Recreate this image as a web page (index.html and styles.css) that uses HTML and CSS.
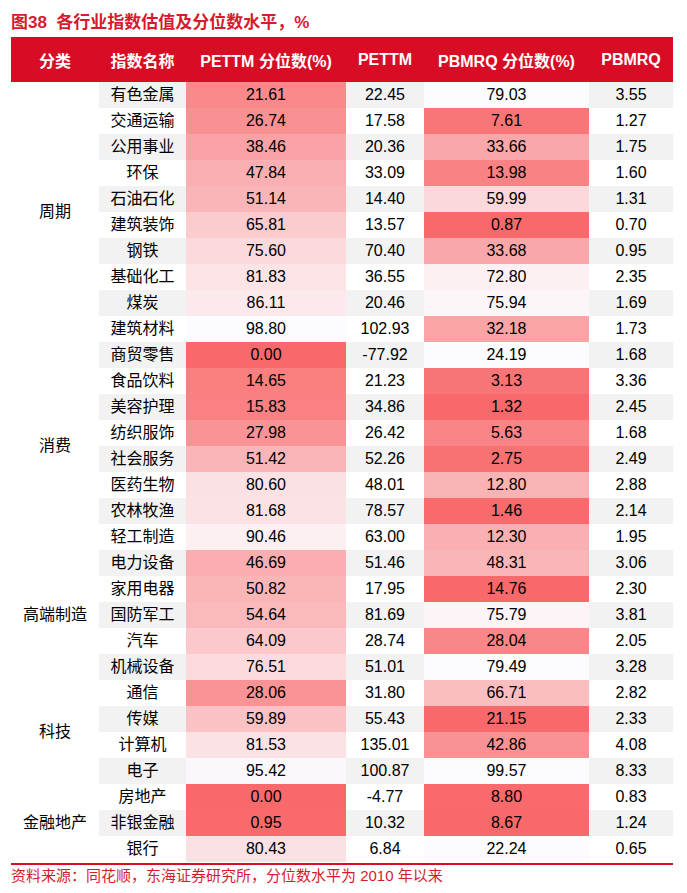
FILE: index.html
```html
<!DOCTYPE html>
<html lang="zh-CN">
<head>
<meta charset="utf-8">
<title>各行业指数估值及分位数水平</title>
<link rel="stylesheet" href="styles.css">
</head>
<body>
<div class="page">
  <div class="title">图38&nbsp;&nbsp;各行业指数估值及分位数水平，%</div>
  <table class="valuation">
    <colgroup>
      <col class="c-cat"><col class="c-name"><col class="c-pep"><col class="c-pe"><col class="c-pbp"><col class="c-pb">
    </colgroup>
    <thead>
      <tr><th>分类</th><th>指数名称</th><th>PETTM 分位数(%)</th><th>PETTM</th><th>PBMRQ 分位数(%)</th><th>PBMRQ</th></tr>
    </thead>
    <tbody>
      <tr class="odd"><td class="cat" rowspan="10">周期</td><td class="name">有色金属</td><td class="heat" style="background:rgb(249,137,139)">21.61</td><td class="plain">22.45</td><td class="heat" style="background:rgb(252,252,255)">79.03</td><td class="plain">3.55</td></tr>
      <tr><td class="name">交通运输</td><td class="heat" style="background:rgb(249,145,147)">26.74</td><td class="plain">17.58</td><td class="heat" style="background:rgb(248,118,120)">7.61</td><td class="plain">1.27</td></tr>
      <tr class="odd"><td class="name">公用事业</td><td class="heat" style="background:rgb(250,162,165)">38.46</td><td class="plain">20.36</td><td class="heat" style="background:rgb(250,167,169)">33.66</td><td class="plain">1.75</td></tr>
      <tr><td class="name">环保</td><td class="heat" style="background:rgb(250,176,179)">47.84</td><td class="plain">33.09</td><td class="heat" style="background:rgb(249,130,132)">13.98</td><td class="plain">1.60</td></tr>
      <tr class="odd"><td class="name">石油石化</td><td class="heat" style="background:rgb(250,181,184)">51.14</td><td class="plain">14.40</td><td class="heat" style="background:rgb(251,216,219)">59.99</td><td class="plain">1.31</td></tr>
      <tr><td class="name">建筑装饰</td><td class="heat" style="background:rgb(251,203,206)">65.81</td><td class="plain">13.57</td><td class="heat" style="background:rgb(248,105,107)">0.87</td><td class="plain">0.70</td></tr>
      <tr class="odd"><td class="name">钢铁</td><td class="heat" style="background:rgb(251,217,220)">75.60</td><td class="plain">70.40</td><td class="heat" style="background:rgb(250,167,169)">33.68</td><td class="plain">0.95</td></tr>
      <tr><td class="name">基础化工</td><td class="heat" style="background:rgb(251,227,230)">81.83</td><td class="plain">36.55</td><td class="heat" style="background:rgb(252,240,243)">72.80</td><td class="plain">2.35</td></tr>
      <tr class="odd"><td class="name">煤炭</td><td class="heat" style="background:rgb(251,233,236)">86.11</td><td class="plain">20.46</td><td class="heat" style="background:rgb(252,246,249)">75.94</td><td class="plain">1.69</td></tr>
      <tr><td class="name">建筑材料</td><td class="heat" style="background:rgb(252,252,255)">98.80</td><td class="plain">102.93</td><td class="heat" style="background:rgb(250,164,166)">32.18</td><td class="plain">1.73</td></tr>

      <tr class="odd"><td class="cat" rowspan="8">消费</td><td class="name">商贸零售</td><td class="heat" style="background:rgb(248,105,107)">0.00</td><td class="plain">-77.92</td><td class="heat" style="background:rgb(252,252,255)">24.19</td><td class="plain">1.68</td></tr>
      <tr><td class="name">食品饮料</td><td class="heat" style="background:rgb(249,127,129)">14.65</td><td class="plain">21.23</td><td class="heat" style="background:rgb(248,117,119)">3.13</td><td class="plain">3.36</td></tr>
      <tr class="odd"><td class="name">美容护理</td><td class="heat" style="background:rgb(249,129,131)">15.83</td><td class="plain">34.86</td><td class="heat" style="background:rgb(248,105,107)">1.32</td><td class="plain">2.45</td></tr>
      <tr><td class="name">纺织服饰</td><td class="heat" style="background:rgb(249,147,149)">27.98</td><td class="plain">26.42</td><td class="heat" style="background:rgb(249,133,135)">5.63</td><td class="plain">1.68</td></tr>
      <tr class="odd"><td class="name">社会服务</td><td class="heat" style="background:rgb(250,181,184)">51.42</td><td class="plain">52.26</td><td class="heat" style="background:rgb(248,114,116)">2.75</td><td class="plain">2.49</td></tr>
      <tr><td class="name">医药生物</td><td class="heat" style="background:rgb(251,225,228)">80.60</td><td class="plain">48.01</td><td class="heat" style="background:rgb(250,179,181)">12.80</td><td class="plain">2.88</td></tr>
      <tr class="odd"><td class="name">农林牧渔</td><td class="heat" style="background:rgb(251,226,229)">81.68</td><td class="plain">78.57</td><td class="heat" style="background:rgb(248,106,108)">1.46</td><td class="plain">2.14</td></tr>
      <tr><td class="name">轻工制造</td><td class="heat" style="background:rgb(252,240,242)">90.46</td><td class="plain">63.00</td><td class="heat" style="background:rgb(250,176,178)">12.30</td><td class="plain">1.95</td></tr>

      <tr class="odd"><td class="cat" rowspan="5">高端制造</td><td class="name">电力设备</td><td class="heat" style="background:rgb(250,174,177)">46.69</td><td class="plain">51.46</td><td class="heat" style="background:rgb(250,181,184)">48.31</td><td class="plain">3.06</td></tr>
      <tr><td class="name">家用电器</td><td class="heat" style="background:rgb(250,181,183)">50.82</td><td class="plain">17.95</td><td class="heat" style="background:rgb(248,105,107)">14.76</td><td class="plain">2.30</td></tr>
      <tr class="odd"><td class="name">国防军工</td><td class="heat" style="background:rgb(250,186,189)">54.64</td><td class="plain">81.69</td><td class="heat" style="background:rgb(252,244,246)">75.79</td><td class="plain">3.81</td></tr>
      <tr><td class="name">汽车</td><td class="heat" style="background:rgb(251,200,203)">64.09</td><td class="plain">28.74</td><td class="heat" style="background:rgb(249,135,137)">28.04</td><td class="plain">2.05</td></tr>
      <tr class="odd"><td class="name">机械设备</td><td class="heat" style="background:rgb(251,219,222)">76.51</td><td class="plain">51.01</td><td class="heat" style="background:rgb(252,252,255)">79.49</td><td class="plain">3.28</td></tr>

      <tr><td class="cat" rowspan="4">科技</td><td class="name">通信</td><td class="heat" style="background:rgb(249,147,149)">28.06</td><td class="plain">31.80</td><td class="heat" style="background:rgb(250,190,193)">66.71</td><td class="plain">2.82</td></tr>
      <tr class="odd"><td class="name">传媒</td><td class="heat" style="background:rgb(250,194,197)">59.89</td><td class="plain">55.43</td><td class="heat" style="background:rgb(248,105,107)">21.15</td><td class="plain">2.33</td></tr>
      <tr><td class="name">计算机</td><td class="heat" style="background:rgb(251,226,229)">81.53</td><td class="plain">135.01</td><td class="heat" style="background:rgb(249,146,148)">42.86</td><td class="plain">4.08</td></tr>
      <tr class="odd"><td class="name">电子</td><td class="heat" style="background:rgb(252,247,250)">95.42</td><td class="plain">100.87</td><td class="heat" style="background:rgb(252,252,255)">99.57</td><td class="plain">8.33</td></tr>

      <tr><td class="cat" rowspan="3">金融地产</td><td class="name">房地产</td><td class="heat" style="background:rgb(248,105,107)">0.00</td><td class="plain">-4.77</td><td class="heat" style="background:rgb(248,106,108)">8.80</td><td class="plain">0.83</td></tr>
      <tr class="odd"><td class="name">非银金融</td><td class="heat" style="background:rgb(248,106,108)">0.95</td><td class="plain">10.32</td><td class="heat" style="background:rgb(248,105,107)">8.67</td><td class="plain">1.24</td></tr>
      <tr><td class="name">银行</td><td class="heat" style="background:rgb(251,225,227)">80.43</td><td class="plain">6.84</td><td class="heat" style="background:rgb(252,252,255)">22.24</td><td class="plain">0.65</td></tr>
    </tbody>
  </table>
  <div class="source">资料来源：同花顺，东海证券研究所，分位数水平为 2010 年以来</div>
</div>
</body>
</html>
```

FILE: styles.css
```css
html, body {
  margin: 0;
  padding: 0;
  background: #ffffff;
}

body {
  font-family: "Liberation Sans", "Noto Sans CJK SC", sans-serif;
  color: #000000;
}

.page {
  width: 662px;
  padding: 11px 14px 0 11px;
}

.title {
  height: 24px;
  line-height: 24px;
  margin-bottom: 2px;
  font-size: 17px;
  font-weight: bold;
  color: #d71a2d;
  white-space: nowrap;
}

.valuation {
  width: 662px;
  table-layout: fixed;
  border-collapse: collapse;
  border-spacing: 0;
}

.c-cat { width: 88px; }
.c-name { width: 87px; }
.c-pep { width: 160px; }
.c-pe { width: 78px; }
.c-pbp { width: 165px; }
.c-pb { width: 84px; }

.valuation th {
  height: 45px;
  padding: 0;
  background: #d80c24;
  color: #ffffff;
  font-size: 16px;
  font-weight: bold;
  text-align: center;
  vertical-align: middle;
  white-space: nowrap;
}

.valuation td {
  height: 26px;
  padding: 0;
  font-size: 16px;
  line-height: 26px;
  text-align: center;
  vertical-align: middle;
  white-space: nowrap;
  background: #ffffff;
}

.valuation tr.odd td.name,
.valuation tr.odd td.plain {
  background: #f2f2f2;
}

.valuation td.cat {
  background: #ffffff;
}

.source {
  margin-top: 1px;
  border-top: 2px solid #d80c24;
  font-size: 15px;
  line-height: 21px;
  color: #d71a2d;
  white-space: nowrap;
}
```
